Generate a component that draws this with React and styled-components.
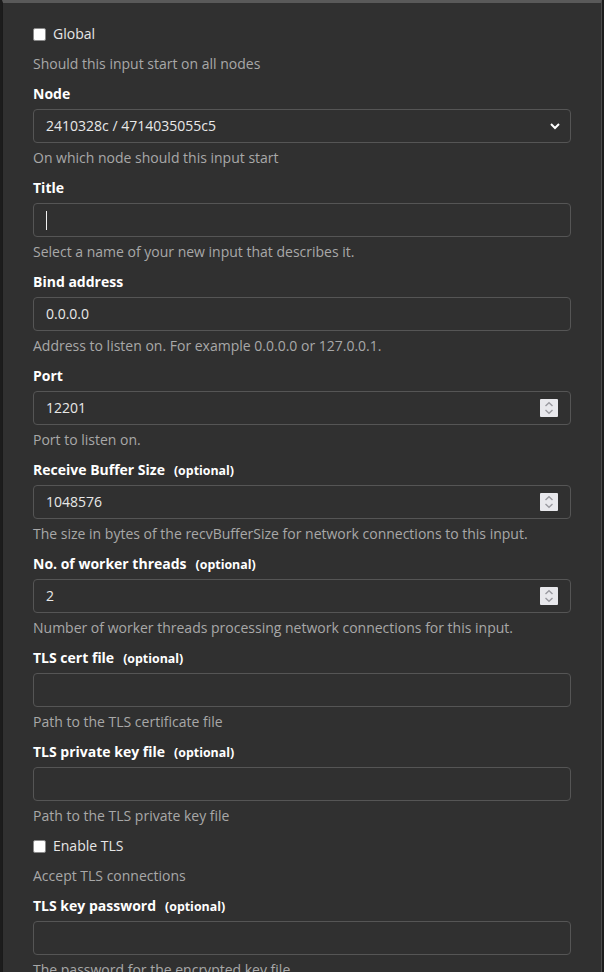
import React from "react";
import styled, { createGlobalStyle } from "styled-components";

const Global = createGlobalStyle`
  html, body { margin: 0; padding: 0; background: #1c1c1c; }
  body { font-family: "Open Sans", "Noto Sans", sans-serif; font-size: 14px; line-height: 20px; }
`;

const Backdrop = styled.div`
  width: 604px;
  height: 972px;
  overflow: hidden;
  padding-left: 2px;
  box-sizing: border-box;
`;

const Modal = styled.div`
  width: 600px;
  min-height: 972px;
  box-sizing: border-box;
  background: #303030;
  border-top: 3px solid #595959;
  border-left: 1px solid #1a1a1a;
  border-right: 1px solid #4a4a4a;
  padding: 20px 30px 0 30px;
`;

const CheckRow = styled.label`
  display: flex;
  align-items: center;
  gap: 7px;
  color: #e6e6e6;
  height: 20px;
  margin-top: ${(p) => p.$top || 0}px;
`;

const Box = styled.span`
  width: 11px;
  height: 11px;
  background: #fff;
  border: 1px solid #8a8a8a;
  border-radius: 2px;
  flex: none;
`;

const Help = styled.div`
  color: #a8a8a8;
  margin-top: ${(p) => p.$top || 5}px;
  margin-bottom: ${(p) => p.$bottom || 10}px;
  height: 20px;
  white-space: nowrap;
`;

const Label = styled.div`
  color: #ffffff;
  font-weight: 700;
  margin-bottom: 5px;
  height: 20px;
`;

const Optional = styled.span`
  font-size: 12.4px;
  margin-left: 9px;
`;

const Field = styled.div`
  position: relative;
  height: 34px;
  width: 538px;
  box-sizing: border-box;
  border: 1px solid #555555;
  border-radius: 4px;
  background: #303030;
  color: #e8e8e8;
  padding: 6px 12px;
  display: flex;
  align-items: center;
`;

const Value = styled.span`
  flex: 1;
`;

const Caret = styled.span`
  width: 1px;
  height: 19px;
  background: #f0f0f0;
`;

const Spinner = styled.span`
  width: 18px;
  height: 18px;
  background: #e8e8ec;
  border-radius: 1px;
  display: flex;
  align-items: center;
  justify-content: center;
`;

const Chevron = styled.span`
  display: flex;
  margin-right: -3px;
`;

const Form = styled.div`
  display: flex;
  flex-direction: column;
`;

function Check({ text, top }) {
  return (
    <CheckRow $top={top}>
      <Box />
      {text}
    </CheckRow>
  );
}

function SpinIcon() {
  return (
    <Spinner>
      <svg width="10" height="14" viewBox="0 0 10 14" fill="none" stroke="#9a9aa0" strokeWidth="1.4">
        <path d="M1.5 5 L5 1.8 L8.5 5" />
        <path d="M1.5 9 L5 12.2 L8.5 9" />
      </svg>
    </Spinner>
  );
}

function Input({ label, optional, value, number, caret, select, help, bottom }) {
  return (
    <>
      <Label>
        {label}
        {optional && <Optional>(optional)</Optional>}
      </Label>
      <Field>
        {caret && <Caret />}
        <Value>{value}</Value>
        {number && <SpinIcon />}
        {select && (
          <Chevron>
            <svg width="12" height="8" viewBox="0 0 12 8" fill="none" stroke="#ffffff" strokeWidth="2">
              <path d="M2 2 L6 6 L10 2" />
            </svg>
          </Chevron>
        )}
      </Field>
      <Help $bottom={bottom}>{help}</Help>
    </>
  );
}

export default function App() {
  return (
    <>
      <Global />
      <Backdrop>
        <Modal>
          <Form>
            <Check text="Global" top={1} />
            <Help $top={10} $bottom={10}>Should this input start on all nodes</Help>
            <Input label="Node" select value="2410328c / 4714035055c5" help="On which node should this input start" />
            <Input label="Title" caret value="" help="Select a name of your new input that describes it." />
            <Input label="Bind address" value="0.0.0.0" help="Address to listen on. For example 0.0.0.0 or 127.0.0.1." />
            <Input label="Port" number value="12201" help="Port to listen on." />
            <Input label="Receive Buffer Size" optional number value="1048576" help="The size in bytes of the recvBufferSize for network connections to this input." />
            <Input label="No. of worker threads" optional number value="2" help="Number of worker threads processing network connections for this input." />
            <Input label="TLS cert file" optional value="" help="Path to the TLS certificate file" />
            <Input label="TLS private key file" optional value="" help="Path to the TLS private key file" />
            <Check text="Enable TLS" />
            <Help $top={10} $bottom={10}>Accept TLS connections</Help>
            <Input label="TLS key password" optional value="" help="The password for the encrypted key file." />
          </Form>
        </Modal>
      </Backdrop>
    </>
  );
}
